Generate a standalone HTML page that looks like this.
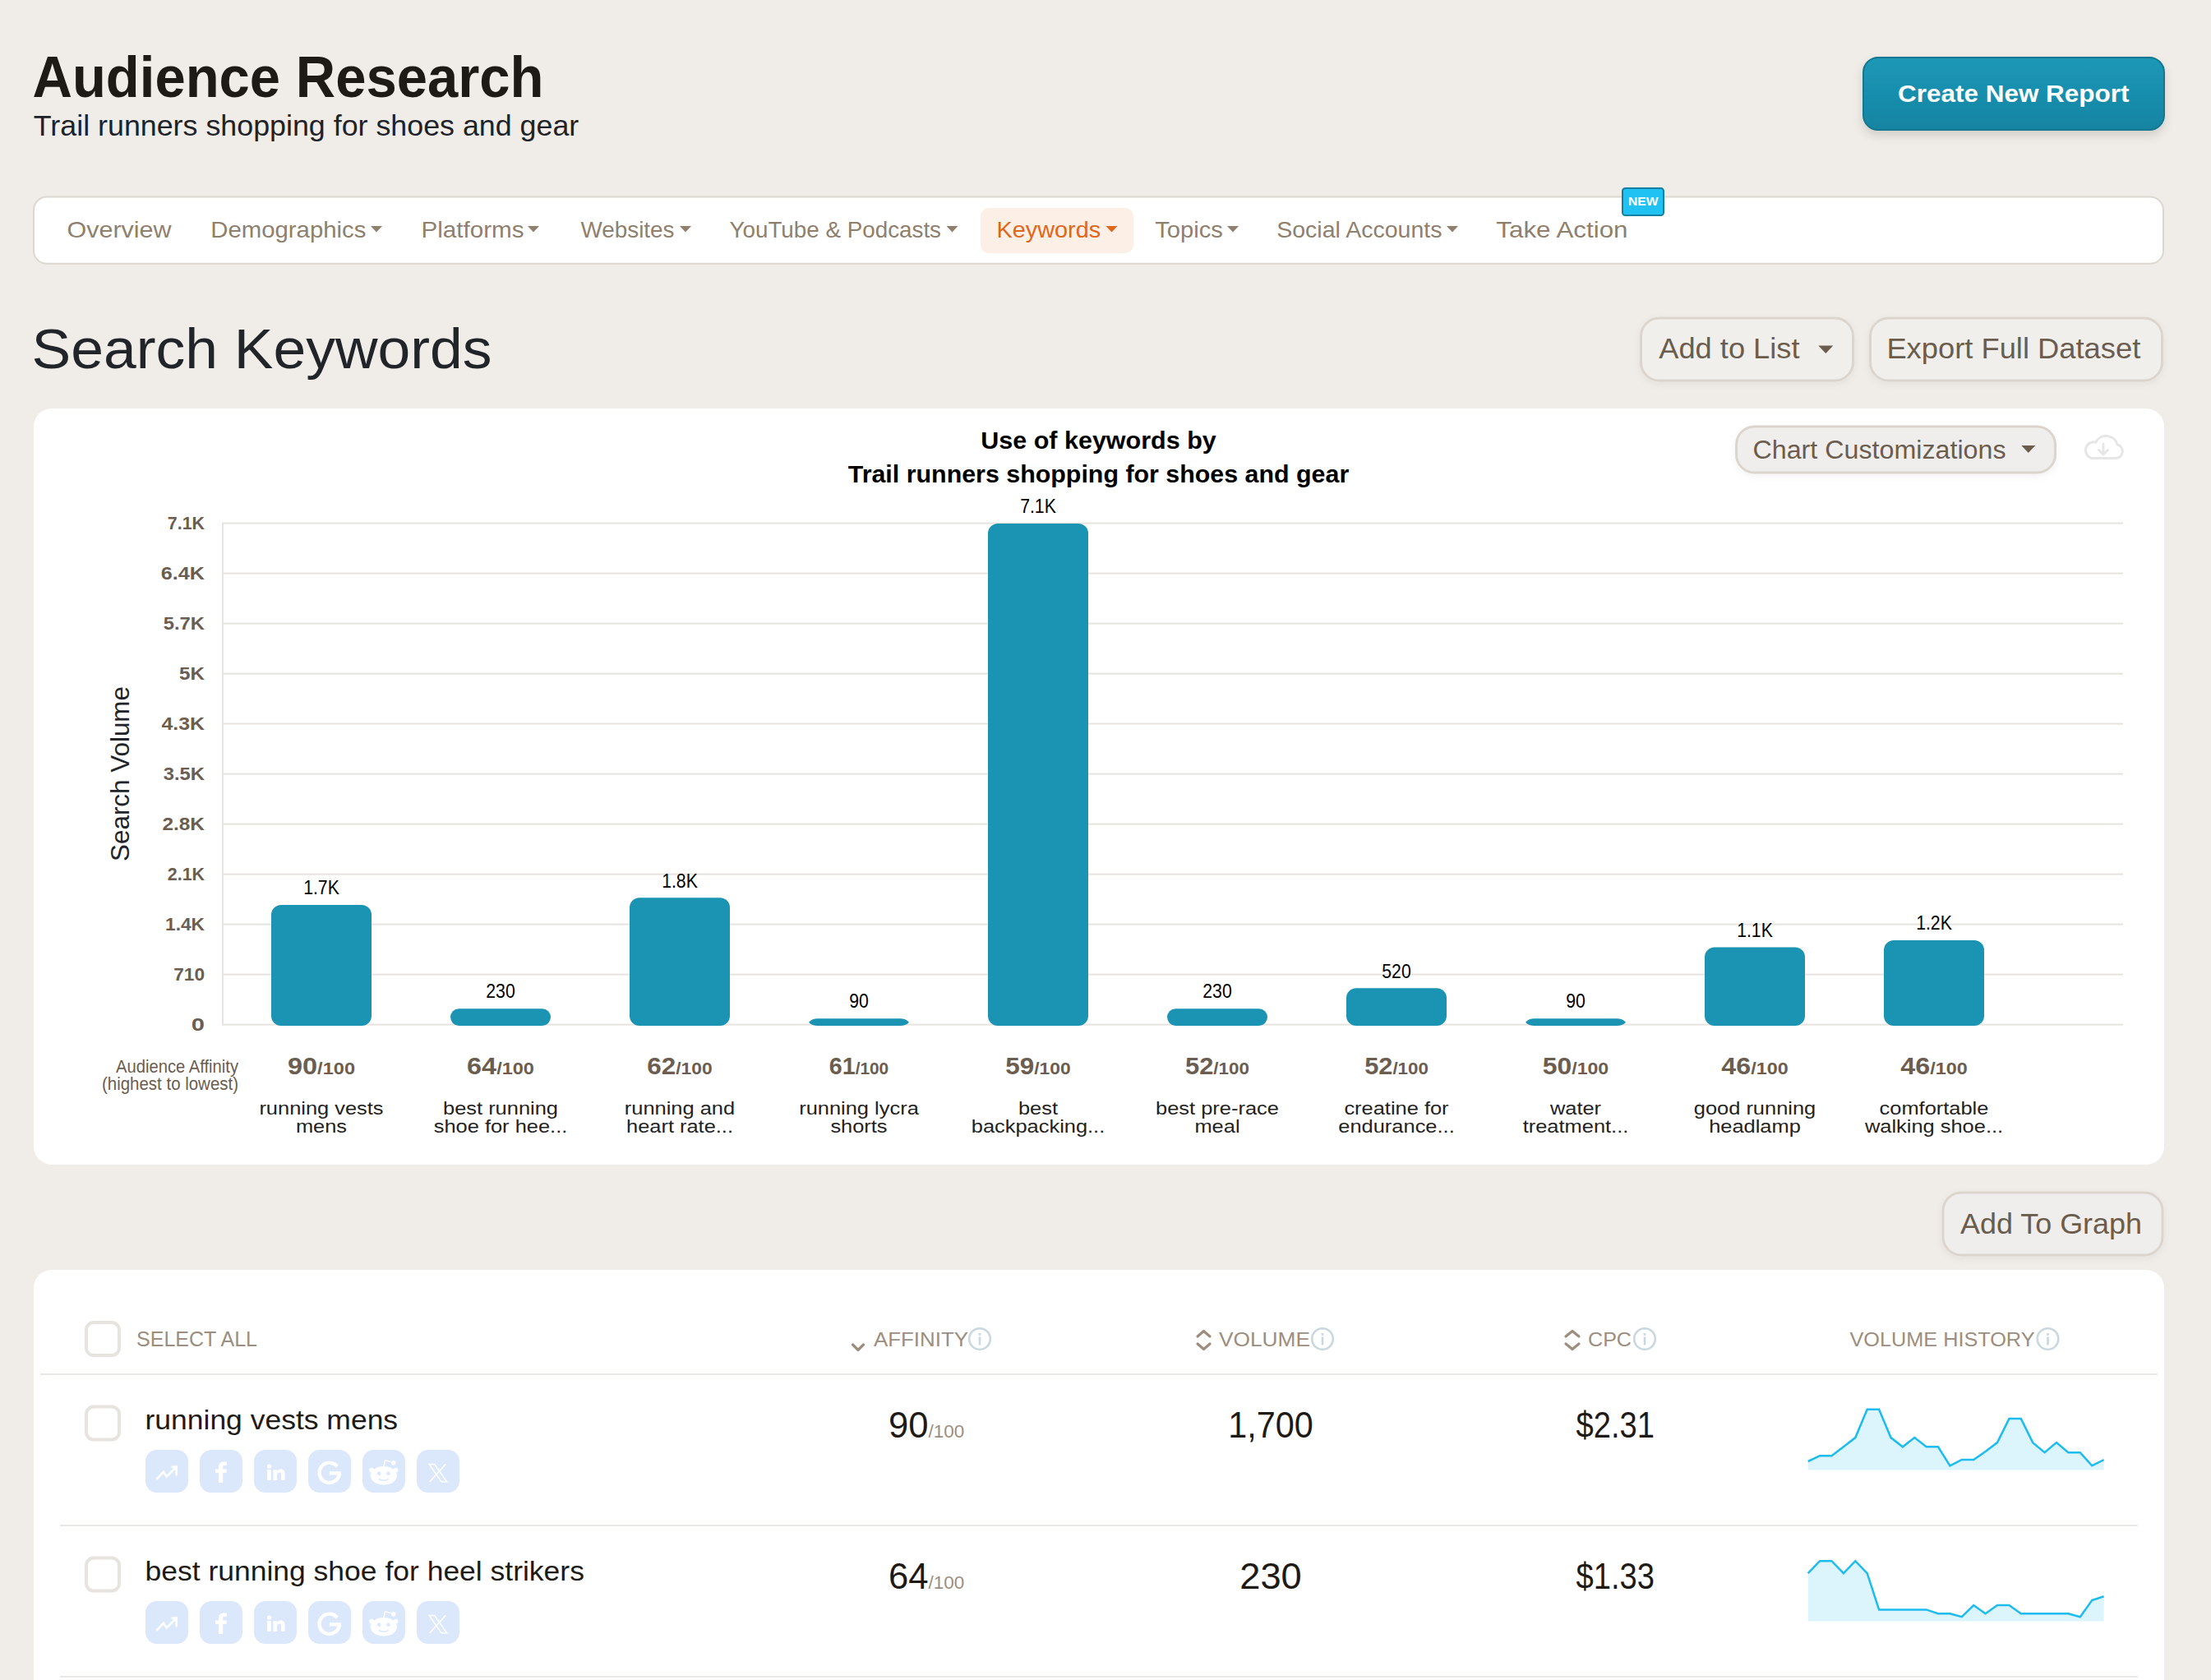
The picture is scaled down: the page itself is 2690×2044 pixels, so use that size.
<!DOCTYPE html><html><head><meta charset="utf-8"><title>Audience Research</title>
<style>html,body{margin:0;padding:0;background:#f0ede8;overflow:hidden;}svg{display:block;width:100%;height:auto;}text{font-family:"Liberation Sans", sans-serif;}</style></head><body>
<svg width="2690" height="2044" viewBox="0 0 2690 2044">
<defs>
<linearGradient id="gBtn" x1="0" y1="0" x2="0" y2="1"><stop offset="0" stop-color="#1b98b7"/><stop offset="1" stop-color="#1784a2"/></linearGradient>
<filter id="sh" x="-10%" y="-30%" width="120%" height="180%"><feDropShadow dx="0" dy="6" stdDeviation="6" flood-color="#000" flood-opacity="0.13"/></filter>
<filter id="sh2" x="-10%" y="-30%" width="120%" height="180%"><feDropShadow dx="0" dy="3" stdDeviation="4" flood-color="#000" flood-opacity="0.05"/></filter>
</defs>
<rect x="0" y="0" width="2690" height="2044" fill="#f0ede8"/>

<text x="39.5" y="118" font-size="69.77" font-weight="700" fill="#1e1a16" textLength="622" lengthAdjust="spacingAndGlyphs" >Audience Research</text>
<text x="40.8" y="164.5" font-size="34.88" font-weight="400" fill="#1f2329" textLength="663.5" lengthAdjust="spacingAndGlyphs" >Trail runners shopping for shoes and gear</text>
<rect x="2267" y="70" width="366" height="88" rx="18" fill="url(#gBtn)" stroke="#137790" stroke-width="2" filter="url(#sh)"/>
<text x="2309" y="124.2" font-size="29.65" font-weight="700" fill="#ffffff" textLength="281.5" lengthAdjust="spacingAndGlyphs" >Create New Report</text>
<rect x="41" y="239.6" width="2591" height="81.2" rx="16" fill="#ffffff" stroke="#dcd7d0" stroke-width="2" />
<rect x="1193" y="253" width="186" height="55" rx="10" fill="#fcefe6" />
<text x="81.5" y="289.3" font-size="28.05" font-weight="400" fill="#8f7f6d" textLength="127" lengthAdjust="spacingAndGlyphs" >Overview</text>
<text x="256.2" y="289.3" font-size="28.05" font-weight="400" fill="#8f7f6d" textLength="189.3" lengthAdjust="spacingAndGlyphs" >Demographics</text>
<path d="M451.0 275 L465.0 275 L458 282.5 Z" fill="#8f7f6d"/>
<text x="512.5" y="289.3" font-size="28.05" font-weight="400" fill="#8f7f6d" textLength="125" lengthAdjust="spacingAndGlyphs" >Platforms</text>
<path d="M642.0 275 L656.0 275 L649 282.5 Z" fill="#8f7f6d"/>
<text x="706.5" y="289.3" font-size="28.05" font-weight="400" fill="#8f7f6d" textLength="114" lengthAdjust="spacingAndGlyphs" >Websites</text>
<path d="M827.0 275 L841.0 275 L834 282.5 Z" fill="#8f7f6d"/>
<text x="887.5" y="289.3" font-size="28.05" font-weight="400" fill="#8f7f6d" textLength="257.5" lengthAdjust="spacingAndGlyphs" >YouTube &amp; Podcasts</text>
<path d="M1151.5 275 L1165.5 275 L1158.5 282.5 Z" fill="#8f7f6d"/>
<text x="1212.5" y="289.3" font-size="28.05" font-weight="400" fill="#e0661c" textLength="126.7" lengthAdjust="spacingAndGlyphs" >Keywords</text>
<path d="M1345.5 275 L1359.5 275 L1352.5 282.5 Z" fill="#e0661c"/>
<text x="1405.3" y="289.3" font-size="28.05" font-weight="400" fill="#8f7f6d" textLength="82.6" lengthAdjust="spacingAndGlyphs" >Topics</text>
<path d="M1493.0 275 L1507.0 275 L1500 282.5 Z" fill="#8f7f6d"/>
<text x="1553.2" y="289.3" font-size="28.05" font-weight="400" fill="#8f7f6d" textLength="201.3" lengthAdjust="spacingAndGlyphs" >Social Accounts</text>
<path d="M1760.0 275 L1774.0 275 L1767 282.5 Z" fill="#8f7f6d"/>
<text x="1820.3" y="289.3" font-size="28.05" font-weight="400" fill="#8f7f6d" textLength="160.2" lengthAdjust="spacingAndGlyphs" >Take Action</text>
<rect x="1974" y="229" width="50" height="33" rx="3.5" fill="#20c2f3" stroke="#137f9c" stroke-width="2" />
<text x="1999.3" y="250" font-size="14.97" font-weight="700" fill="#ffffff" text-anchor="middle" textLength="36.5" lengthAdjust="spacingAndGlyphs" >NEW</text>
<text x="38.5" y="447.5" font-size="69.04" font-weight="400" fill="#212529" textLength="560" lengthAdjust="spacingAndGlyphs" >Search Keywords</text>
<rect x="1996.5" y="387" width="258" height="76" rx="22" fill="#f1efec" stroke="#dbd5ce" stroke-width="3" filter="url(#sh2)"/>
<text x="2018.3" y="436" font-size="34.88" font-weight="400" fill="#6b5d4e" textLength="171.2" lengthAdjust="spacingAndGlyphs" >Add to List</text>
<path d="M2212.3 420.5 L2230.3 420.5 L2221.3 430.0 Z" fill="#6b5d4e"/>
<rect x="2275.5" y="387" width="355" height="76" rx="22" fill="#f1efec" stroke="#dbd5ce" stroke-width="3" filter="url(#sh2)"/>
<text x="2295.4" y="436" font-size="34.88" font-weight="400" fill="#6b5d4e" textLength="308.9" lengthAdjust="spacingAndGlyphs" >Export Full Dataset</text>
<rect x="41" y="497" width="2592" height="920" rx="22" fill="#ffffff" />
<text x="1336.5" y="545.9" font-size="29.94" font-weight="700" fill="#000000" text-anchor="middle" textLength="286.5" lengthAdjust="spacingAndGlyphs" >Use of keywords by</text>
<text x="1336.5" y="587" font-size="29.94" font-weight="700" fill="#000000" text-anchor="middle" textLength="609.5" lengthAdjust="spacingAndGlyphs" >Trail runners shopping for shoes and gear</text>
<rect x="2112.5" y="519" width="388" height="56" rx="22" fill="#f0eeec" stroke="#dbd5ce" stroke-width="3" filter="url(#sh2)"/>
<text x="2132.5" y="557.6" font-size="30.81" font-weight="400" fill="#6b5d4e" textLength="308" lengthAdjust="spacingAndGlyphs" >Chart Customizations</text>
<path d="M2459.3 542 L2476.3 542 L2467.8 551 Z" fill="#6b5d4e"/>
<g fill="none" stroke="#e6e6e6" stroke-width="3" stroke-linecap="round" stroke-linejoin="round"><path d="M2545 557.5 L2574 557.5 A8.5 8.5 0 0 0 2576 540.8 A14 14 0 0 0 2550 538 A9.8 9.8 0 0 0 2545 557.5 Z"/><path d="M2559 540 L2559 553 M2553.5 547.5 L2559 553 L2564.5 547.5"/></g>
<rect x="271" y="635.6" width="2312" height="2" fill="#e7e3de"/>
<text x="249" y="644.3000000000001" font-size="22.53" font-weight="700" fill="#6b5d4f" text-anchor="end" textLength="45.2" lengthAdjust="spacingAndGlyphs" >7.1K</text>
<rect x="271" y="696.6" width="2312" height="2" fill="#e7e3de"/>
<text x="249" y="705.3000000000001" font-size="22.53" font-weight="700" fill="#6b5d4f" text-anchor="end" textLength="53.2" lengthAdjust="spacingAndGlyphs" >6.4K</text>
<rect x="271" y="757.6" width="2312" height="2" fill="#e7e3de"/>
<text x="249" y="766.3000000000001" font-size="22.53" font-weight="700" fill="#6b5d4f" text-anchor="end" textLength="50.2" lengthAdjust="spacingAndGlyphs" >5.7K</text>
<rect x="271" y="818.6" width="2312" height="2" fill="#e7e3de"/>
<text x="249" y="827.3000000000001" font-size="22.53" font-weight="700" fill="#6b5d4f" text-anchor="end" textLength="30.9" lengthAdjust="spacingAndGlyphs" >5K</text>
<rect x="271" y="879.6" width="2312" height="2" fill="#e7e3de"/>
<text x="249" y="888.3000000000001" font-size="22.53" font-weight="700" fill="#6b5d4f" text-anchor="end" textLength="52.6" lengthAdjust="spacingAndGlyphs" >4.3K</text>
<rect x="271" y="940.6" width="2312" height="2" fill="#e7e3de"/>
<text x="249" y="949.3000000000001" font-size="22.53" font-weight="700" fill="#6b5d4f" text-anchor="end" textLength="50.2" lengthAdjust="spacingAndGlyphs" >3.5K</text>
<rect x="271" y="1001.6" width="2312" height="2" fill="#e7e3de"/>
<text x="249" y="1010.3000000000001" font-size="22.53" font-weight="700" fill="#6b5d4f" text-anchor="end" textLength="51.6" lengthAdjust="spacingAndGlyphs" >2.8K</text>
<rect x="271" y="1062.6" width="2312" height="2" fill="#e7e3de"/>
<text x="249" y="1071.3" font-size="22.53" font-weight="700" fill="#6b5d4f" text-anchor="end" textLength="45.2" lengthAdjust="spacingAndGlyphs" >2.1K</text>
<rect x="271" y="1123.6" width="2312" height="2" fill="#e7e3de"/>
<text x="249" y="1132.3" font-size="22.53" font-weight="700" fill="#6b5d4f" text-anchor="end" textLength="48" lengthAdjust="spacingAndGlyphs" >1.4K</text>
<rect x="271" y="1184.6" width="2312" height="2" fill="#e7e3de"/>
<text x="249" y="1193.3" font-size="22.53" font-weight="700" fill="#6b5d4f" text-anchor="end" textLength="37.8" lengthAdjust="spacingAndGlyphs" >710</text>
<rect x="271" y="1245.6" width="2312" height="2" fill="#e7e3de"/>
<text x="249" y="1254.3" font-size="22.53" font-weight="700" fill="#6b5d4f" text-anchor="end" textLength="16.2" lengthAdjust="spacingAndGlyphs" >0</text>
<rect x="270" y="635.6" width="2" height="612.0" fill="#e7e3de"/>
<text transform="translate(157 941.5) rotate(-90)" x="0" y="0" font-size="31.98" fill="#212529" text-anchor="middle" textLength="213" lengthAdjust="spacingAndGlyphs">Search Volume</text>
<rect x="330" y="1100.943661971831" width="122" height="147.05633802816897" rx="12" fill="#1a94b2"/>
<text x="391" y="1088.143661971831" font-size="24.71" font-weight="400" fill="#000000" text-anchor="middle" textLength="43.7" lengthAdjust="spacingAndGlyphs" >1.7K</text>
<text x="391" y="1307" text-anchor="middle" font-weight="700" fill="#6b5d4f" textLength="82" lengthAdjust="spacingAndGlyphs"><tspan font-size="29.07">90</tspan><tspan font-size="21.08">/100</tspan></text>
<text x="391" y="1355.6" font-size="22.5" font-weight="400" fill="#222222" text-anchor="middle" textLength="151.2" lengthAdjust="spacingAndGlyphs" >running vests</text>
<text x="391" y="1377.7" font-size="22.5" font-weight="400" fill="#222222" text-anchor="middle" textLength="62.2" lengthAdjust="spacingAndGlyphs" >mens</text>
<rect x="548" y="1227.2394366197184" width="122" height="20.76056338028161" rx="10.380281690140805" fill="#1a94b2"/>
<text x="609" y="1214.4394366197184" font-size="24.71" font-weight="400" fill="#000000" text-anchor="middle" textLength="35.4" lengthAdjust="spacingAndGlyphs" >230</text>
<text x="609" y="1307" text-anchor="middle" font-weight="700" fill="#6b5d4f" textLength="81.8" lengthAdjust="spacingAndGlyphs"><tspan font-size="29.07">64</tspan><tspan font-size="21.08">/100</tspan></text>
<text x="609" y="1355.6" font-size="22.5" font-weight="400" fill="#222222" text-anchor="middle" textLength="139.9" lengthAdjust="spacingAndGlyphs" >best running</text>
<text x="609" y="1377.7" font-size="22.5" font-weight="400" fill="#222222" text-anchor="middle" textLength="162.6" lengthAdjust="spacingAndGlyphs" >shoe for hee...</text>
<rect x="766" y="1092.3521126760563" width="122" height="155.64788732394368" rx="12" fill="#1a94b2"/>
<text x="827" y="1079.5521126760564" font-size="24.71" font-weight="400" fill="#000000" text-anchor="middle" textLength="43.7" lengthAdjust="spacingAndGlyphs" >1.8K</text>
<text x="827" y="1307" text-anchor="middle" font-weight="700" fill="#6b5d4f" textLength="79.3" lengthAdjust="spacingAndGlyphs"><tspan font-size="29.07">62</tspan><tspan font-size="21.08">/100</tspan></text>
<text x="827" y="1355.6" font-size="22.5" font-weight="400" fill="#222222" text-anchor="middle" textLength="134.3" lengthAdjust="spacingAndGlyphs" >running and</text>
<text x="827" y="1377.7" font-size="22.5" font-weight="400" fill="#222222" text-anchor="middle" textLength="130.0" lengthAdjust="spacingAndGlyphs" >heart rate...</text>
<path d="M984 1243.6338028169014 Q988 1239.2676056338028 995 1239.2676056338028 L1095 1239.2676056338028 Q1102 1239.2676056338028 1106 1243.6338028169014 Q1102 1248 1095 1248 L995 1248 Q988 1248 984 1243.6338028169014 Z" fill="#1a94b2"/>
<text x="1045" y="1226.4676056338028" font-size="24.71" font-weight="400" fill="#000000" text-anchor="middle" textLength="23.6" lengthAdjust="spacingAndGlyphs" >90</text>
<text x="1045" y="1307" text-anchor="middle" font-weight="700" fill="#6b5d4f" textLength="72.4" lengthAdjust="spacingAndGlyphs"><tspan font-size="29.07">61</tspan><tspan font-size="21.08">/100</tspan></text>
<text x="1045" y="1355.6" font-size="22.5" font-weight="400" fill="#222222" text-anchor="middle" textLength="145.6" lengthAdjust="spacingAndGlyphs" >running lycra</text>
<text x="1045" y="1377.7" font-size="22.5" font-weight="400" fill="#222222" text-anchor="middle" textLength="69.2" lengthAdjust="spacingAndGlyphs" >shorts</text>
<rect x="1202" y="637.0" width="122" height="611.0" rx="12" fill="#1a94b2"/>
<text x="1263" y="624.2" font-size="24.71" font-weight="400" fill="#000000" text-anchor="middle" textLength="43.7" lengthAdjust="spacingAndGlyphs" >7.1K</text>
<text x="1263" y="1307" text-anchor="middle" font-weight="700" fill="#6b5d4f" textLength="79.3" lengthAdjust="spacingAndGlyphs"><tspan font-size="29.07">59</tspan><tspan font-size="21.08">/100</tspan></text>
<text x="1263" y="1355.6" font-size="22.5" font-weight="400" fill="#222222" text-anchor="middle" textLength="48.1" lengthAdjust="spacingAndGlyphs" >best</text>
<text x="1263" y="1377.7" font-size="22.5" font-weight="400" fill="#222222" text-anchor="middle" textLength="162.5" lengthAdjust="spacingAndGlyphs" >backpacking...</text>
<rect x="1420" y="1227.2394366197184" width="122" height="20.76056338028161" rx="10.380281690140805" fill="#1a94b2"/>
<text x="1481" y="1214.4394366197184" font-size="24.71" font-weight="400" fill="#000000" text-anchor="middle" textLength="35.4" lengthAdjust="spacingAndGlyphs" >230</text>
<text x="1481" y="1307" text-anchor="middle" font-weight="700" fill="#6b5d4f" textLength="78" lengthAdjust="spacingAndGlyphs"><tspan font-size="29.07">52</tspan><tspan font-size="21.08">/100</tspan></text>
<text x="1481" y="1355.6" font-size="22.5" font-weight="400" fill="#222222" text-anchor="middle" textLength="149.8" lengthAdjust="spacingAndGlyphs" >best pre-race</text>
<text x="1481" y="1377.7" font-size="22.5" font-weight="400" fill="#222222" text-anchor="middle" textLength="55.1" lengthAdjust="spacingAndGlyphs" >meal</text>
<rect x="1638" y="1202.3239436619717" width="122" height="45.676056338028275" rx="12" fill="#1a94b2"/>
<text x="1699" y="1189.5239436619718" font-size="24.71" font-weight="400" fill="#000000" text-anchor="middle" textLength="35.4" lengthAdjust="spacingAndGlyphs" >520</text>
<text x="1699" y="1307" text-anchor="middle" font-weight="700" fill="#6b5d4f" textLength="77.7" lengthAdjust="spacingAndGlyphs"><tspan font-size="29.07">52</tspan><tspan font-size="21.08">/100</tspan></text>
<text x="1699" y="1355.6" font-size="22.5" font-weight="400" fill="#222222" text-anchor="middle" textLength="127.2" lengthAdjust="spacingAndGlyphs" >creatine for</text>
<text x="1699" y="1377.7" font-size="22.5" font-weight="400" fill="#222222" text-anchor="middle" textLength="141.4" lengthAdjust="spacingAndGlyphs" >endurance...</text>
<path d="M1856 1243.6338028169014 Q1860 1239.2676056338028 1867 1239.2676056338028 L1967 1239.2676056338028 Q1974 1239.2676056338028 1978 1243.6338028169014 Q1974 1248 1967 1248 L1867 1248 Q1860 1248 1856 1243.6338028169014 Z" fill="#1a94b2"/>
<text x="1917" y="1226.4676056338028" font-size="24.71" font-weight="400" fill="#000000" text-anchor="middle" textLength="23.6" lengthAdjust="spacingAndGlyphs" >90</text>
<text x="1917" y="1307" text-anchor="middle" font-weight="700" fill="#6b5d4f" textLength="80.5" lengthAdjust="spacingAndGlyphs"><tspan font-size="29.07">50</tspan><tspan font-size="21.08">/100</tspan></text>
<text x="1917" y="1355.6" font-size="22.5" font-weight="400" fill="#222222" text-anchor="middle" textLength="62.2" lengthAdjust="spacingAndGlyphs" >water</text>
<text x="1917" y="1377.7" font-size="22.5" font-weight="400" fill="#222222" text-anchor="middle" textLength="128.6" lengthAdjust="spacingAndGlyphs" >treatment...</text>
<rect x="2074" y="1152.4929577464789" width="122" height="95.50704225352115" rx="12" fill="#1a94b2"/>
<text x="2135" y="1139.692957746479" font-size="24.71" font-weight="400" fill="#000000" text-anchor="middle" textLength="43.7" lengthAdjust="spacingAndGlyphs" >1.1K</text>
<text x="2135" y="1307" text-anchor="middle" font-weight="700" fill="#6b5d4f" textLength="81.3" lengthAdjust="spacingAndGlyphs"><tspan font-size="29.07">46</tspan><tspan font-size="21.08">/100</tspan></text>
<text x="2135" y="1355.6" font-size="22.5" font-weight="400" fill="#222222" text-anchor="middle" textLength="148.5" lengthAdjust="spacingAndGlyphs" >good running</text>
<text x="2135" y="1377.7" font-size="22.5" font-weight="400" fill="#222222" text-anchor="middle" textLength="111.7" lengthAdjust="spacingAndGlyphs" >headlamp</text>
<rect x="2292" y="1143.9014084507041" width="122" height="104.09859154929586" rx="12" fill="#1a94b2"/>
<text x="2353" y="1131.1014084507042" font-size="24.71" font-weight="400" fill="#000000" text-anchor="middle" textLength="43.7" lengthAdjust="spacingAndGlyphs" >1.2K</text>
<text x="2353" y="1307" text-anchor="middle" font-weight="700" fill="#6b5d4f" textLength="81.3" lengthAdjust="spacingAndGlyphs"><tspan font-size="29.07">46</tspan><tspan font-size="21.08">/100</tspan></text>
<text x="2353" y="1355.6" font-size="22.5" font-weight="400" fill="#222222" text-anchor="middle" textLength="132.8" lengthAdjust="spacingAndGlyphs" >comfortable</text>
<text x="2353" y="1377.7" font-size="22.5" font-weight="400" fill="#222222" text-anchor="middle" textLength="168.2" lengthAdjust="spacingAndGlyphs" >walking shoe...</text>
<text x="290" y="1304.5" font-size="21.8" font-weight="400" fill="#6b5d4f" text-anchor="end" textLength="149" lengthAdjust="spacingAndGlyphs" >Audience Affinity</text>
<text x="290" y="1325.6" font-size="21.8" font-weight="400" fill="#6b5d4f" text-anchor="end" textLength="166" lengthAdjust="spacingAndGlyphs" >(highest to lowest)</text>
<rect x="2364" y="1451" width="267" height="76" rx="22" fill="#f0eeec" stroke="#dbd5ce" stroke-width="3" filter="url(#sh2)"/>
<text x="2385" y="1500.5" font-size="34.88" font-weight="400" fill="#6b5d4e" textLength="221" lengthAdjust="spacingAndGlyphs" >Add To Graph</text>
<rect x="41" y="1545" width="2592" height="600" rx="22" fill="#ffffff" />
<rect x="105" y="1609" width="40" height="40" rx="9" fill="#ffffff" stroke="#e7e3de" stroke-width="4" />
<text x="166" y="1638.2" font-size="25.0" font-weight="400" fill="#9c8e7e" textLength="147" lengthAdjust="spacingAndGlyphs" >SELECT ALL</text>
<path d="M1037.5 1636 L1044 1642.5 L1050.5 1636" fill="none" stroke="#9c8e7e" stroke-width="3.2" stroke-linecap="round" stroke-linejoin="round"/>
<text x="1063" y="1637.8" font-size="24.27" font-weight="400" fill="#9c8e7e" textLength="115" lengthAdjust="spacingAndGlyphs" >AFFINITY</text>
<circle cx="1192" cy="1629" r="12.8" fill="none" stroke="#c9d8de" stroke-width="2.6"/><rect x="1190.7" y="1622" width="2.6" height="2.8" fill="#c9d8de"/><rect x="1190.7" y="1626.5" width="2.6" height="10" fill="#c9d8de"/>
<path d="M1457 1626 L1464.5 1619.5 L1472 1626 M1457 1635 L1464.5 1641.5 L1472 1635" fill="none" stroke="#9c8e7e" stroke-width="3.2" stroke-linecap="round" stroke-linejoin="round"/>
<text x="1483" y="1637.8" font-size="24.27" font-weight="400" fill="#9c8e7e" textLength="111" lengthAdjust="spacingAndGlyphs" >VOLUME</text>
<circle cx="1609" cy="1629" r="12.8" fill="none" stroke="#c9d8de" stroke-width="2.6"/><rect x="1607.7" y="1622" width="2.6" height="2.8" fill="#c9d8de"/><rect x="1607.7" y="1626.5" width="2.6" height="10" fill="#c9d8de"/>
<path d="M1905 1626 L1913.0 1619.5 L1921 1626 M1905 1635 L1913.0 1641.5 L1921 1635" fill="none" stroke="#9c8e7e" stroke-width="3.2" stroke-linecap="round" stroke-linejoin="round"/>
<text x="1932" y="1637.8" font-size="24.27" font-weight="400" fill="#9c8e7e" textLength="53" lengthAdjust="spacingAndGlyphs" >CPC</text>
<circle cx="2001" cy="1629" r="12.8" fill="none" stroke="#c9d8de" stroke-width="2.6"/><rect x="1999.7" y="1622" width="2.6" height="2.8" fill="#c9d8de"/><rect x="1999.7" y="1626.5" width="2.6" height="10" fill="#c9d8de"/>
<text x="2250.5" y="1637.8" font-size="24.27" font-weight="400" fill="#9c8e7e" textLength="225" lengthAdjust="spacingAndGlyphs" >VOLUME HISTORY</text>
<circle cx="2491.5" cy="1629" r="12.8" fill="none" stroke="#c9d8de" stroke-width="2.6"/><rect x="2490.2" y="1622" width="2.6" height="2.8" fill="#c9d8de"/><rect x="2490.2" y="1626.5" width="2.6" height="10" fill="#c9d8de"/>
<rect x="49" y="1671" width="2576" height="2" fill="#ece9e5"/>
<rect x="105" y="1711.5" width="40" height="40" rx="9" fill="#ffffff" stroke="#e7e3de" stroke-width="4" />
<text x="176.5" y="1739" font-size="33" font-weight="400" fill="#1e1a16" textLength="307.6" lengthAdjust="spacingAndGlyphs" >running vests mens</text>
<rect x="177" y="1764" width="52" height="52" rx="14" fill="#dbe8fc" />
<rect x="243" y="1764" width="52" height="52" rx="14" fill="#dbe8fc" />
<rect x="309" y="1764" width="52" height="52" rx="14" fill="#dbe8fc" />
<rect x="375" y="1764" width="52" height="52" rx="14" fill="#dbe8fc" />
<rect x="441" y="1764" width="52" height="52" rx="14" fill="#dbe8fc" />
<rect x="507" y="1764" width="52" height="52" rx="14" fill="#dbe8fc" />
<g transform="translate(0 0)" fill="#ffffff"><path d="M190.4 1799.8 L198.9 1790.8 L202.7 1796.5 L214.1 1785.1" fill="none" stroke="#fff" stroke-width="2.6"/><path d="M208.6 1784.6 L214.7 1784.6 L214.7 1795.2" fill="none" stroke="#fff" stroke-width="2.6"/><path d="M266 1804 L266 1792 L262 1792 L262 1787.5 L266 1787.5 L266 1785 C266 1780.5 268.5 1778.5 273 1778.5 L276 1778.5 L276 1782.8 L273.5 1782.8 C271.8 1782.8 271.2 1783.5 271.2 1785.2 L271.2 1787.5 L276 1787.5 L275.3 1792 L271.2 1792 L271.2 1804 Z"/><circle cx="327.5" cy="1784" r="2.6"/><rect x="325.2" y="1788" width="4.6" height="13"/><path d="M332.5 1788 L337 1788 L337 1790 C338 1788.5 339.5 1787.6 341.8 1787.6 C345.5 1787.6 346.5 1790 346.5 1793.5 L346.5 1801 L342 1801 L342 1794.5 C342 1792.5 341.3 1791.5 339.8 1791.5 C338 1791.5 337 1792.7 337 1794.8 L337 1801 L332.5 1801 Z"/><path d="M410.3 1784.2 A12.2 12.2 0 1 0 412.9 1792.3 L401 1792.3" fill="none" stroke="#fff" stroke-width="4.3"/><ellipse cx="466.8" cy="1795.3" rx="16.2" ry="11.2"/><circle cx="452" cy="1788.6" r="3"/><circle cx="481.6" cy="1788.6" r="3"/><circle cx="478.8" cy="1779.8" r="2.8"/><path d="M466.8 1784 L468.6 1776.8 L475.5 1778.6" fill="none" stroke="#fff" stroke-width="1.5"/><path d="M522.2 1781.6 L528.8 1781.6 L543.6 1802.7 L537 1802.7 Z" stroke="#fff" stroke-width="1.5" fill="none"/><path d="M542 1781.6 L522.8 1802.7" stroke="#fff" stroke-width="1.7" fill="none"/></g>
<g transform="translate(0 0)" fill="#dbe8fc"><circle cx="461.1" cy="1792.8" r="2.3"/><circle cx="472.5" cy="1792.8" r="2.3"/><path d="M460.8 1799.5 Q466.8 1803 472.8 1799.5" fill="none" stroke="#dbe8fc" stroke-width="1.5"/><path d="M449 1790.5 A3.5 3.5 0 0 1 454.5 1786.2 M484.6 1790.5 A3.5 3.5 0 0 0 479.1 1786.2" fill="none" stroke="#dbe8fc" stroke-width="1.4"/></g>
<text x="1081" y="1749.4" font-weight="400" fill="#1e1a16"><tspan font-size="43.6">90</tspan><tspan font-size="22.53" fill="#9c8e7e">/100</tspan></text>
<text x="1546" y="1749.4" font-size="43.6" font-weight="400" fill="#1e1a16" text-anchor="middle" textLength="103.5" lengthAdjust="spacingAndGlyphs" >1,700</text>
<text x="1917.5" y="1749.4" font-size="43.6" font-weight="400" fill="#1e1a16" textLength="95.5" lengthAdjust="spacingAndGlyphs" >$2.31</text>
<polygon points="2199.7,1788.5 2199.7,1778.0 2214.1,1771.2 2228.5,1771.2 2242.9,1760.3 2257.3,1749.1 2271.7,1714.8 2286.1,1714.8 2300.5,1749.1 2314.9,1760.3 2329.3,1749.1 2343.7,1760.3 2358.0,1760.3 2372.4,1783.3 2386.8,1776.0 2401.2,1776.0 2415.6,1766.0 2430.0,1755.1 2444.4,1726.1 2458.8,1726.1 2473.2,1755.1 2487.6,1767.2 2502.0,1755.1 2516.4,1767.2 2530.8,1767.2 2545.2,1783.3 2559.6,1776.0 2559.6,1788.5" fill="#dcf4fc"/>
<polyline points="2199.7,1778.0 2214.1,1771.2 2228.5,1771.2 2242.9,1760.3 2257.3,1749.1 2271.7,1714.8 2286.1,1714.8 2300.5,1749.1 2314.9,1760.3 2329.3,1749.1 2343.7,1760.3 2358.0,1760.3 2372.4,1783.3 2386.8,1776.0 2401.2,1776.0 2415.6,1766.0 2430.0,1755.1 2444.4,1726.1 2458.8,1726.1 2473.2,1755.1 2487.6,1767.2 2502.0,1755.1 2516.4,1767.2 2530.8,1767.2 2545.2,1783.3 2559.6,1776.0" fill="none" stroke="#1dbcef" stroke-width="2.5" stroke-linejoin="miter"/>
<rect x="73" y="1855" width="2528" height="2" fill="#ece9e5"/>
<rect x="105" y="1895.5" width="40" height="40" rx="9" fill="#ffffff" stroke="#e7e3de" stroke-width="4" />
<text x="176.5" y="1923" font-size="33" font-weight="400" fill="#1e1a16" textLength="534.4" lengthAdjust="spacingAndGlyphs" >best running shoe for heel strikers</text>
<rect x="177" y="1948" width="52" height="52" rx="14" fill="#dbe8fc" />
<rect x="243" y="1948" width="52" height="52" rx="14" fill="#dbe8fc" />
<rect x="309" y="1948" width="52" height="52" rx="14" fill="#dbe8fc" />
<rect x="375" y="1948" width="52" height="52" rx="14" fill="#dbe8fc" />
<rect x="441" y="1948" width="52" height="52" rx="14" fill="#dbe8fc" />
<rect x="507" y="1948" width="52" height="52" rx="14" fill="#dbe8fc" />
<g transform="translate(0 184)" fill="#ffffff"><path d="M190.4 1799.8 L198.9 1790.8 L202.7 1796.5 L214.1 1785.1" fill="none" stroke="#fff" stroke-width="2.6"/><path d="M208.6 1784.6 L214.7 1784.6 L214.7 1795.2" fill="none" stroke="#fff" stroke-width="2.6"/><path d="M266 1804 L266 1792 L262 1792 L262 1787.5 L266 1787.5 L266 1785 C266 1780.5 268.5 1778.5 273 1778.5 L276 1778.5 L276 1782.8 L273.5 1782.8 C271.8 1782.8 271.2 1783.5 271.2 1785.2 L271.2 1787.5 L276 1787.5 L275.3 1792 L271.2 1792 L271.2 1804 Z"/><circle cx="327.5" cy="1784" r="2.6"/><rect x="325.2" y="1788" width="4.6" height="13"/><path d="M332.5 1788 L337 1788 L337 1790 C338 1788.5 339.5 1787.6 341.8 1787.6 C345.5 1787.6 346.5 1790 346.5 1793.5 L346.5 1801 L342 1801 L342 1794.5 C342 1792.5 341.3 1791.5 339.8 1791.5 C338 1791.5 337 1792.7 337 1794.8 L337 1801 L332.5 1801 Z"/><path d="M410.3 1784.2 A12.2 12.2 0 1 0 412.9 1792.3 L401 1792.3" fill="none" stroke="#fff" stroke-width="4.3"/><ellipse cx="466.8" cy="1795.3" rx="16.2" ry="11.2"/><circle cx="452" cy="1788.6" r="3"/><circle cx="481.6" cy="1788.6" r="3"/><circle cx="478.8" cy="1779.8" r="2.8"/><path d="M466.8 1784 L468.6 1776.8 L475.5 1778.6" fill="none" stroke="#fff" stroke-width="1.5"/><path d="M522.2 1781.6 L528.8 1781.6 L543.6 1802.7 L537 1802.7 Z" stroke="#fff" stroke-width="1.5" fill="none"/><path d="M542 1781.6 L522.8 1802.7" stroke="#fff" stroke-width="1.7" fill="none"/></g>
<g transform="translate(0 184)" fill="#dbe8fc"><circle cx="461.1" cy="1792.8" r="2.3"/><circle cx="472.5" cy="1792.8" r="2.3"/><path d="M460.8 1799.5 Q466.8 1803 472.8 1799.5" fill="none" stroke="#dbe8fc" stroke-width="1.5"/><path d="M449 1790.5 A3.5 3.5 0 0 1 454.5 1786.2 M484.6 1790.5 A3.5 3.5 0 0 0 479.1 1786.2" fill="none" stroke="#dbe8fc" stroke-width="1.4"/></g>
<text x="1081" y="1933.4" font-weight="400" fill="#1e1a16"><tspan font-size="43.6">64</tspan><tspan font-size="22.53" fill="#9c8e7e">/100</tspan></text>
<text x="1546" y="1933.4" font-size="43.6" font-weight="400" fill="#1e1a16" text-anchor="middle" textLength="75.5" lengthAdjust="spacingAndGlyphs" >230</text>
<text x="1917.5" y="1933.4" font-size="43.6" font-weight="400" fill="#1e1a16" textLength="95.5" lengthAdjust="spacingAndGlyphs" >$1.33</text>
<polygon points="2199.7,1972.5 2199.7,1914.1 2214.1,1899.2 2228.5,1899.2 2242.9,1914.1 2257.3,1899.2 2271.7,1914.1 2286.1,1958.4 2300.5,1958.4 2314.9,1958.4 2329.3,1958.4 2343.7,1958.4 2358.0,1963.2 2372.4,1963.2 2386.8,1967.2 2401.2,1953.1 2415.6,1963.2 2430.0,1953.1 2444.4,1953.1 2458.8,1963.2 2473.2,1963.2 2487.6,1963.2 2502.0,1963.2 2516.4,1963.2 2530.8,1967.2 2545.2,1947.1 2559.6,1942.3 2559.6,1972.5" fill="#dcf4fc"/>
<polyline points="2199.7,1914.1 2214.1,1899.2 2228.5,1899.2 2242.9,1914.1 2257.3,1899.2 2271.7,1914.1 2286.1,1958.4 2300.5,1958.4 2314.9,1958.4 2329.3,1958.4 2343.7,1958.4 2358.0,1963.2 2372.4,1963.2 2386.8,1967.2 2401.2,1953.1 2415.6,1963.2 2430.0,1953.1 2444.4,1953.1 2458.8,1963.2 2473.2,1963.2 2487.6,1963.2 2502.0,1963.2 2516.4,1963.2 2530.8,1967.2 2545.2,1947.1 2559.6,1942.3" fill="none" stroke="#1dbcef" stroke-width="2.5" stroke-linejoin="miter"/>
<rect x="73" y="2039" width="2528" height="2" fill="#ece9e5"/>
</svg></body></html>
